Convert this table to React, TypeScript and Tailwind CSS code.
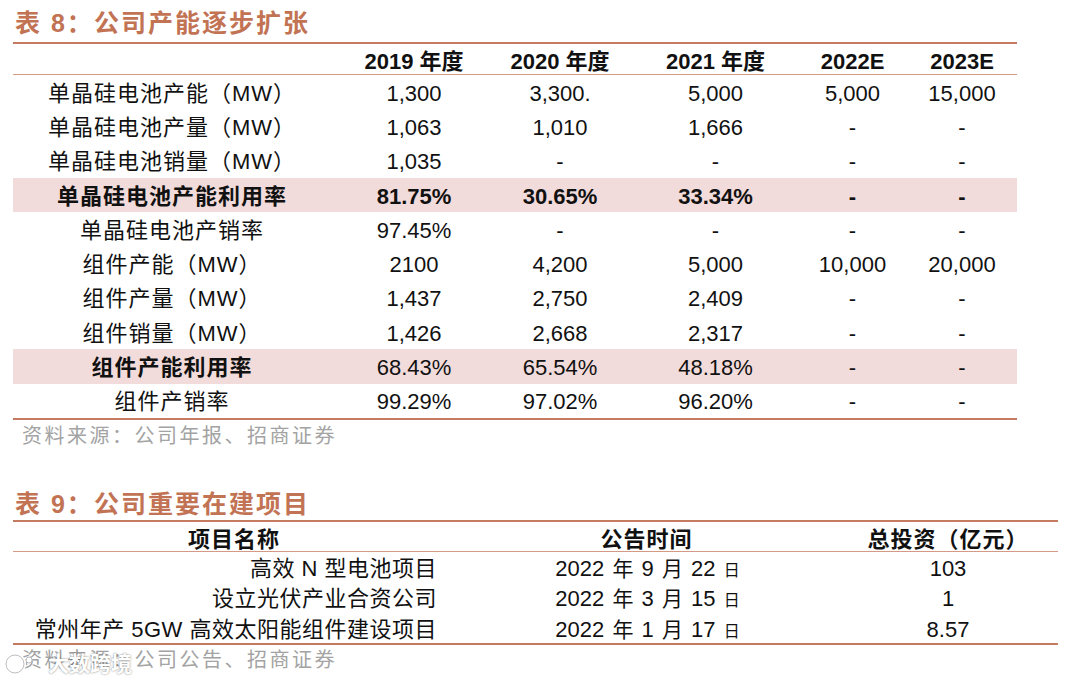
import React from "react";

const FONT = "font-['Liberation_Sans','Noto_Sans_CJK_SC',sans-serif]";

type Row = { label: string; v: string[]; hl?: boolean; boldLabel?: boolean; boldVals?: boolean };

const rows: Row[] = [
  { label: "单晶硅电池产能（MW）", v: ["1,300", "3,300.", "5,000", "5,000", "15,000"] },
  { label: "单晶硅电池产量（MW）", v: ["1,063", "1,010", "1,666", "-", "-"] },
  { label: "单晶硅电池销量（MW）", v: ["1,035", "-", "-", "-", "-"] },
  { label: "单晶硅电池产能利用率", v: ["81.75%", "30.65%", "33.34%", "-", "-"], hl: true, boldLabel: true, boldVals: true },
  { label: "单晶硅电池产销率", v: ["97.45%", "-", "-", "-", "-"] },
  { label: "组件产能（MW）", v: ["2100", "4,200", "5,000", "10,000", "20,000"] },
  { label: "组件产量（MW）", v: ["1,437", "2,750", "2,409", "-", "-"] },
  { label: "组件销量（MW）", v: ["1,426", "2,668", "2,317", "-", "-"] },
  { label: "组件产能利用率", v: ["68.43%", "65.54%", "48.18%", "-", "-"], hl: true, boldLabel: true },
  { label: "组件产销率", v: ["99.29%", "97.02%", "96.20%", "-", "-"] },
];

const headers = ["2019 年度", "2020 年度", "2021 年度", "2022E", "2023E"];

function Title({ num, text }: { num: string; text: string }) {
  return (
    <div className="text-[25px] leading-[32px] font-bold text-[#c27354] tracking-[2px] pl-[15px]">
      表 <span>{num}</span>：{text}
    </div>
  );
}

function DateText({ m, d }: { m: string; d: string }) {
  return (
    <span>
      2022 <span className="text-[21px] mx-[2px]">年</span> {m} <span className="text-[21px] mx-[2px]">月</span> {d}{" "}
      <span className="text-[16px] ml-[2px]">日</span>
    </span>
  );
}

const projects = [
  { name: <>高效 N 型电池项目</>, m: "9", d: "22", amt: "103" },
  { name: <>设立光伏产业合资公司</>, m: "3", d: "15", amt: "1" },
  { name: <>常州年产 5GW 高效太阳能组件建设项目</>, m: "1", d: "17", amt: "8.57" },
];

export default function App() {
  return (
    <div className={`${FONT} w-[1080px] h-[689px] bg-white text-[#111] overflow-hidden`}>
      {/* Table 8 */}
      <div className="h-[42px] pt-[7px]">
        <Title num="8" text="公司产能逐步扩张" />
      </div>
      <div className="ml-[13px] w-[1004px] border-t-[2.5px] border-b-[2.5px] border-[#c57b62]">
        <div className="grid grid-cols-[318px_166px_126px_185px_89px_120px] h-[31px] items-center border-b border-[#d49a85] text-[22px] font-bold pt-[1px]">
          <div />
          {headers.map((h, i) => (
            <div key={h} className={`text-center ${i === 4 ? "pl-[10px]" : ""}`}>
              {h}
            </div>
          ))}
        </div>
        {rows.map((r) => (
          <div
            key={r.label}
            className={`grid grid-cols-[318px_166px_126px_185px_89px_120px] h-[34.3px] pt-[3px] items-center text-[22px] leading-none ${
              r.hl ? "bg-[#f2dcdb]" : ""
            }`}
          >
            <div className={`text-center tracking-[1px] ${r.boldLabel ? "font-bold" : ""}`}>{r.label}</div>
            {r.v.map((v, i) => (
              <div key={i} className={`text-center ${r.boldVals ? "font-bold" : ""} ${i === 4 ? "pl-[10px]" : ""}`}>
                {v}
              </div>
            ))}
          </div>
        ))}
      </div>
      <div className="h-[30px] flex items-center pt-[2px] pl-[22px] text-[20px] tracking-[2.5px] text-[#a3a3a3]">
        资料来源：公司年报、招商证券
      </div>

      {/* Table 9 */}
      <div className="h-[70px] pt-[38px]">
        <Title num="9" text="公司重要在建项目" />
      </div>
      <div className="ml-[13px] w-[1045px] border-t-[2.5px] border-b-[2.5px] border-[#c57b62]">
        <div className="grid grid-cols-[442px_383px_220px] h-[30px] pt-[1px] items-center border-b border-[#d49a85] text-[22px] font-bold tracking-[1px]">
          <div className="text-center">项目名称</div>
          <div className="text-center">公告时间</div>
          <div className="text-center">总投资（亿元）</div>
        </div>
        {projects.map((p, i) => (
          <div key={i} className="grid grid-cols-[442px_383px_220px] h-[30.5px] pt-[3px] items-center text-[22px] leading-none">
            <div className="text-right pr-[18px] tracking-[0.5px]">{p.name}</div>
            <div className="text-center pl-[2px]">
              <DateText m={p.m} d={p.d} />
            </div>
            <div className="text-center">{p.amt}</div>
          </div>
        ))}
      </div>
      <div className="relative h-[28px] flex items-center pt-[2px] pl-[22px] text-[20px] tracking-[2.5px] text-[#a3a3a3]">
        资料来源：公司公告、招商证券
        <div className="absolute left-[2px] top-[3px] flex items-center gap-[6px]">
          <svg width="40" height="26" viewBox="0 0 40 26">
            <circle cx="13" cy="13" r="9" fill="none" stroke="#ffffff" strokeWidth="4" />
            <circle cx="13" cy="13" r="9" fill="none" stroke="#bdbdbd" strokeWidth="1" />
            <circle cx="27" cy="9" r="3" fill="#ffffff" stroke="#bdbdbd" strokeWidth="1" />
          </svg>
          <span className="text-[21px] font-bold tracking-[0px] text-white [text-shadow:0_0_2px_rgba(0,0,0,0.55)]">
            大数跨境
          </span>
        </div>
      </div>
    </div>
  );
}
